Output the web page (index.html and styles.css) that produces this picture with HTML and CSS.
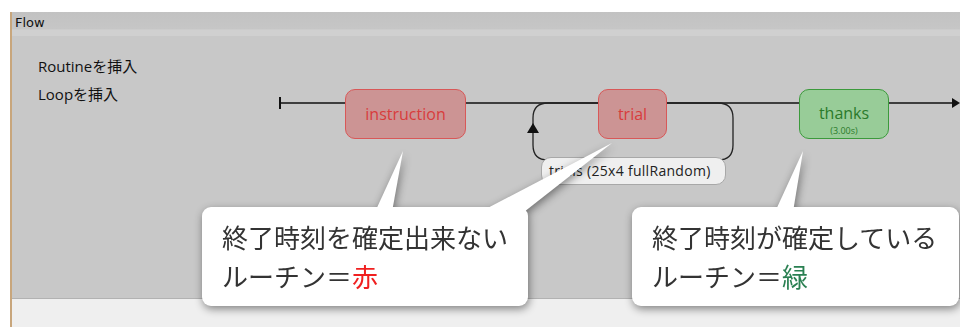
FILE: index.html
```html
<!DOCTYPE html>
<html lang="ja">
<head>
    <meta charset="UTF-8">
    <title>Flow</title>
    <link rel="stylesheet" href="styles.css">
</head>
<body>
    <div class="page">
        <div class="window">
            <div class="title">Flow</div>

            <div class="canvas">
                <!-- Insert menu -->
                <ul class="menu">
                    <li>Routineを挿入</li>
                    <li>Loopを挿入</li>
                </ul>

                <!-- Flow line, loop and arrows -->
                <svg class="wires" width="948" height="262" viewBox="0 0 948 262">
                    <line x1="268" y1="67" x2="942" y2="67" stroke="#111" stroke-width="1.5"/>
                    <line x1="268" y1="61" x2="268" y2="73" stroke="#111" stroke-width="2"/>
                    <polygon points="948,67 940,62 940,72" fill="#111"/>
                    <path d="M536 67 H706 Q721 67 721 82 V109 Q721 124 706 124 H536 Q521 124 521 109 V82 Q521 67 536 67"
                          fill="none" stroke="#222" stroke-width="1.3"/>
                    <polygon points="521,87 515,97 527,97" fill="#111"/>
                </svg>

                <div class="node red node-instruction">instruction</div>
                <div class="node red node-trial">trial</div>
                <div class="node green node-thanks">
                    <span class="node-name">thanks</span>
                    <small>(3.00s)</small>
                </div>

                <div class="loop-label">trials (25x4 fullRandom)</div>
            </div>

            <div class="footer"></div>
        </div>

        <!-- Callouts -->
        <div class="callouts">
            <svg class="pointers" width="960" height="327" viewBox="0 0 960 327">
                <polygon points="375,212 392,212 403,151" fill="#fff"/>
                <polygon points="480,212 524,212 612,143" fill="#fff"/>
                <polygon points="775,212 793,212 803,151" fill="#fff"/>
            </svg>
            <div class="callout callout-left">
                <p>終了時刻を確定出来ない</p>
                <p>ルーチン＝<span class="c-red">赤</span></p>
            </div>
            <div class="callout callout-right">
                <p>終了時刻が確定している</p>
                <p>ルーチン＝<span class="c-green">緑</span></p>
            </div>
        </div>
    </div>
</body>
</html>
```

FILE: styles.css
```css
body {
    margin: 0;
    background: #fff;
    font-family: "Open Sans", "Noto Sans CJK JP", sans-serif;
}
.page {
    position: relative;
    width: 960px;
    height: 327px;
    overflow: hidden;
}
.window {
    margin: 12px 0 0 10px;
    height: 315px;
    border-left: 2px solid #c8a67c;
    display: flex;
    flex-direction: column;
}
.title {
    height: 24px;
    box-sizing: border-box;
    padding: 3px 0 0 3px;
    font-family: "DejaVu Sans", sans-serif;
    font-size: 13px;
    color: #111;
    background: linear-gradient(#c2c2c2, #c6c6c6 70%, #d0d0d0 75%, #d0d0d0);
}
.canvas {
    position: relative;
    height: 262px;
    background: #c8c8c8;
    border-bottom: 1px solid #b2b2b2;
}
.footer {
    flex: 1;
    background: #efefef;
}
.menu {
    list-style: none;
    margin: 0;
    padding: 16px 0 0 26px;
    font-size: 15px;
    line-height: 28px;
    color: #111;
}
.wires {
    position: absolute;
    left: 0;
    top: 0;
}
.node {
    position: absolute;
    top: 53px;
    height: 50px;
    box-sizing: border-box;
    border-radius: 10px;
    display: flex;
    flex-direction: column;
    align-items: center;
    justify-content: center;
    font-size: 16px;
}
.node.red {
    background: #cc9494;
    border: 1.5px solid #d85858;
    color: #d83c3c;
}
.node.green {
    background: #98cc98;
    border: 1.5px solid #3c9a3c;
    color: #2b7a2b;
    justify-content: flex-start;
    padding-top: 12px;
}
.node-name {
    line-height: 22px;
}
.node small {
    font-size: 9px;
    line-height: 13px;
}
.node-instruction {
    left: 333px;
    width: 121px;
}
.node-trial {
    left: 586px;
    width: 69px;
}
.node-thanks {
    left: 787px;
    width: 90px;
}
.loop-label {
    position: absolute;
    left: 529px;
    top: 121px;
    width: 185px;
    height: 28px;
    box-sizing: border-box;
    border: 1px solid #a8a8a8;
    border-radius: 10px;
    background: #efefef;
    font-size: 14px;
    letter-spacing: 0.3px;
    line-height: 26px;
    padding-left: 7px;
    color: #222;
    white-space: nowrap;
}
.callouts {
    position: absolute;
    left: 0;
    top: 0;
    width: 960px;
    height: 327px;
    filter: drop-shadow(1px 3px 4px rgba(0, 0, 0, 0.45));
}
.pointers {
    position: absolute;
    left: 0;
    top: 0;
}
.callout {
    position: absolute;
    top: 207px;
    height: 99px;
    box-sizing: border-box;
    background: #fff;
    border-radius: 9px;
    padding: 10px 0 0 20px;
    font-family: "Noto Sans CJK JP", sans-serif;
    font-size: 26px;
    color: #333;
}
.callout p {
    margin: 0;
    line-height: 39px;
}
.callout-left {
    left: 202px;
    width: 326px;
}
.callout-right {
    left: 632px;
    width: 327px;
}
.c-red {
    color: #f02020;
}
.c-green {
    color: #2a8052;
}
```
